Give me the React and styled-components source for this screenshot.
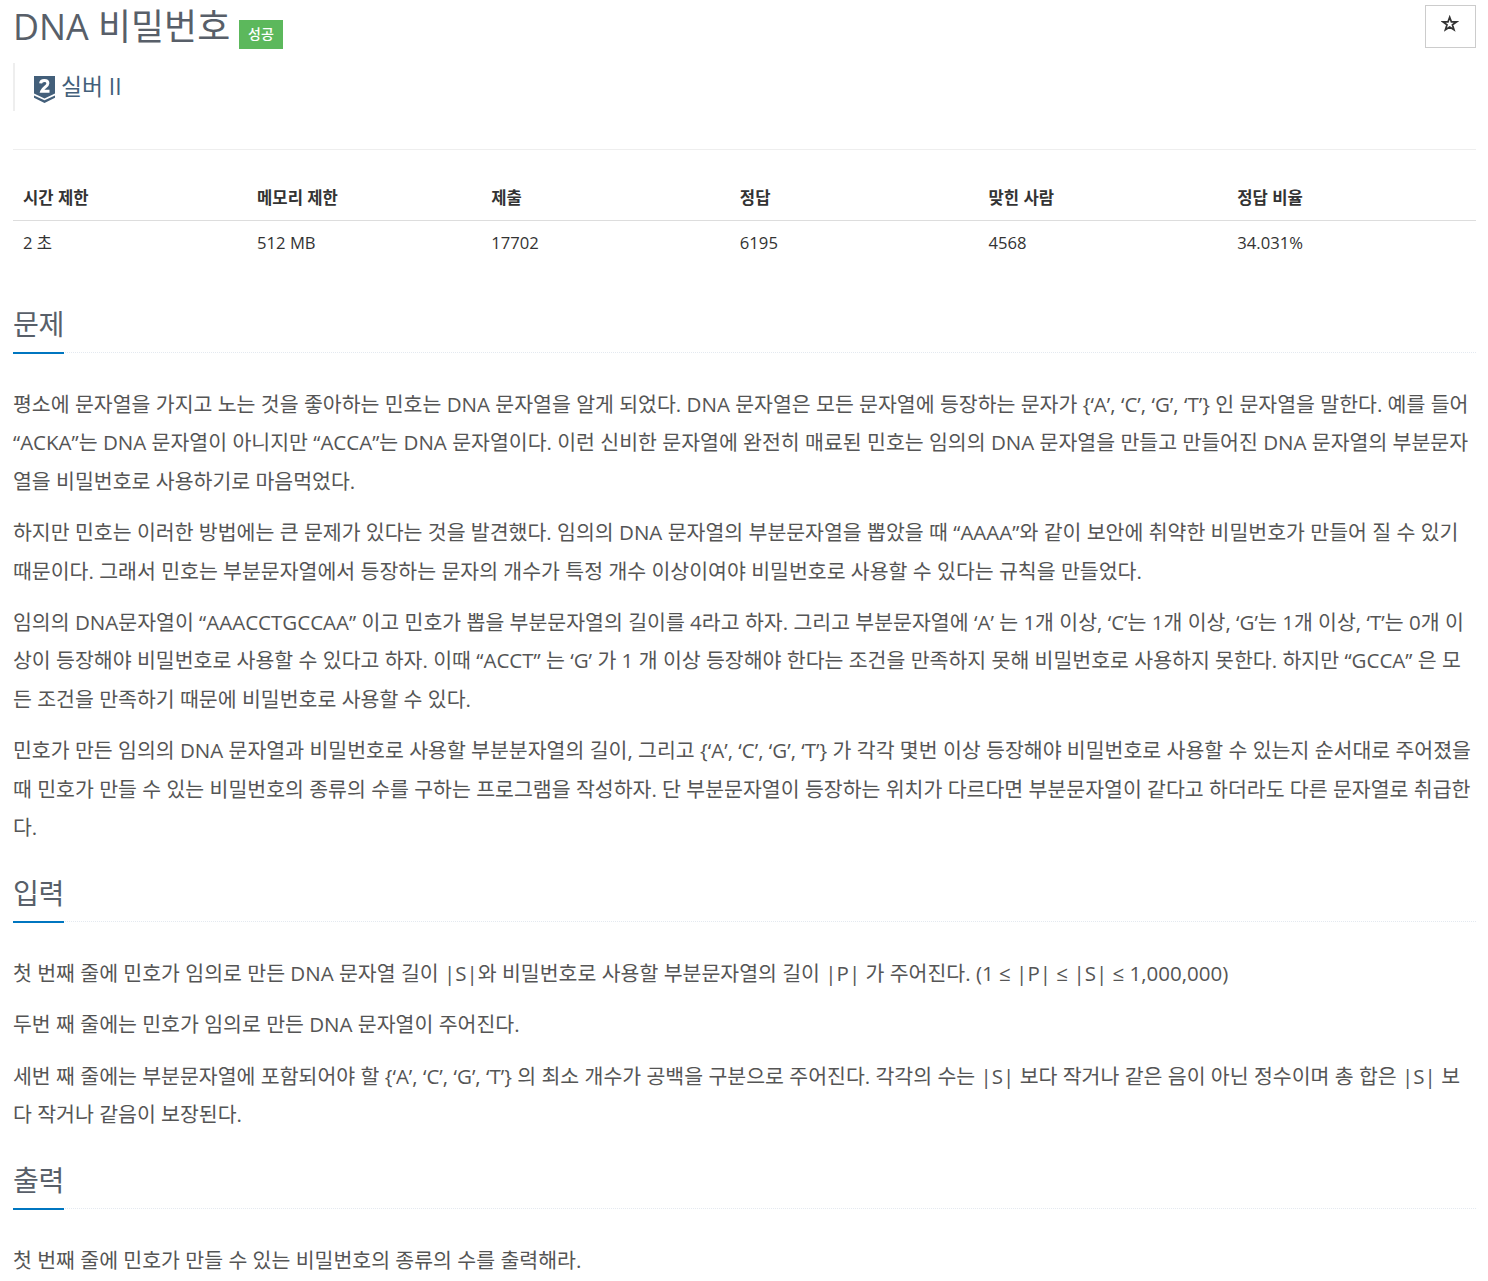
import * as React from 'react';
import styled, { createGlobalStyle } from 'styled-components';

const GlobalStyle = createGlobalStyle`
  * {
    box-sizing: border-box;
  }
  body {
    margin: 0;
    background: white;
    color: #333;
    font-family: 'Open Sans', 'Noto Sans CJK KR', sans-serif;
    font-size: 16.64px;
    line-height: 1.6;
  }
`;

const Container = styled.div`
  width: 1488px;
  height: 1281px;
  overflow: hidden;
  padding: 0 12px 0 13px;
`;

const Header = styled.header`
  display: flex;
  justify-content: space-between;
  height: 150px;
  border-bottom: 1px solid #eee;
`;

const TitleRow = styled.div`
  display: flex;
  align-items: flex-start;
  height: 63px;
`;

const Title = styled.h1`
  width: 216px;
  margin: 0;
  padding-top: 1px;
  font-size: 35.9px;
  font-weight: 400;
  line-height: 51px;
  color: #585f69;
  white-space: nowrap;
`;

const Label = styled.span`
  width: 44px;
  height: 29px;
  margin: 20px 0 0 10px;
  background: #5cb85c;
  color: white;
  font-size: 14px;
  font-weight: 500;
  line-height: 28px;
  text-align: center;
`;

const Tier = styled.blockquote`
  display: flex;
  height: 48px;
  margin: 0;
  padding: 12px 0 0 19px;
  border-left: 2px solid #eee;
  color: #435f7a;
  font-size: 22.8px;
  font-weight: 400;
  line-height: 23px;
`;

const TierIcon = styled.svg`
  width: 21px;
  height: 28px;
  margin: 1px 6px 0 0;
`;

const StarButton = styled.button`
  display: flex;
  align-items: flex-start;
  justify-content: center;
  width: 51px;
  height: 43px;
  margin-top: 5px;
  padding: 9px 2px 0 0;
  border: 1px solid #ccc;
  background: white;
`;

const Table = styled.table`
  width: 100%;
  margin-top: 25px;
  border-collapse: collapse;
  table-layout: fixed;
`;

const Th = styled.th`
  width: ${({ $width }) => $width};
  height: 45px;
  padding: 1px 10px 0;
  border-bottom: 1px solid #ddd;
  text-align: left;
  line-height: 24px;
`;

const Td = styled.td`
  height: 45px;
  padding: 0 10px;
  line-height: 24px;
`;

const Section = styled.section`
  padding-bottom: ${({ $gap }) => $gap};
`;

const Headline = styled.div`
  height: 49px;
  margin: ${({ $first }) => ($first ? '39.4px 0 31.6px' : '0 0 32px')};
  border-bottom: 1px dotted #e4e9f0;
`;

const SectionTitle = styled.h2`
  display: inline-block;
  height: 50px;
  margin: 0;
  border-bottom: 2px solid #0076c0;
  color: #585f69;
  font-size: 28.16px;
  font-weight: 400;
  line-height: 41.2px;
  letter-spacing: -0.4px;
`;

const Paragraph = styled.p`
  margin: 0 0 12.88px;
  color: #555;
  font-size: 20.537px;
  line-height: 38.45px;
`;

const Line = styled.span`
  display: block;
  white-space: nowrap;
`;

const limits = [
  { name: '시간 제한', value: '2 초', width: '16%' },
  { name: '메모리 제한', value: '512 MB', width: '16%' },
  { name: '제출', value: '17702', width: '17%' },
  { name: '정답', value: '6195', width: '17%' },
  { name: '맞힌 사람', value: '4568', width: '17%' },
  { name: '정답 비율', value: '34.031%', width: '17%' },
];

const sections = [
  {
    title: '문제',
    gap: '13.4px',
    paragraphs: [
      [
        '평소에 문자열을 가지고 노는 것을 좋아하는 민호는 DNA 문자열을 알게 되었다. DNA 문자열은 모든 문자열에 등장하는 문자가 {‘A’, ‘C’, ‘G’, ‘T’} 인 문자열을 말한다. 예를 들어',
        '“ACKA”는 DNA 문자열이 아니지만 “ACCA”는 DNA 문자열이다. 이런 신비한 문자열에 완전히 매료된 민호는 임의의 DNA 문자열을 만들고 만들어진 DNA 문자열의 부분문자',
        '열을 비밀번호로 사용하기로 마음먹었다.',
      ],
      [
        '하지만 민호는 이러한 방법에는 큰 문제가 있다는 것을 발견했다. 임의의 DNA 문자열의 부분문자열을 뽑았을 때 “AAAA”와 같이 보안에 취약한 비밀번호가 만들어 질 수 있기',
        '때문이다. 그래서 민호는 부분문자열에서 등장하는 문자의 개수가 특정 개수 이상이여야 비밀번호로 사용할 수 있다는 규칙을 만들었다.',
      ],
      [
        '임의의 DNA문자열이 “AAACCTGCCAA” 이고 민호가 뽑을 부분문자열의 길이를 4라고 하자. 그리고 부분문자열에 ‘A’ 는 1개 이상, ‘C’는 1개 이상, ‘G’는 1개 이상, ‘T’는 0개 이',
        '상이 등장해야 비밀번호로 사용할 수 있다고 하자. 이때 “ACCT” 는 ‘G’ 가 1 개 이상 등장해야 한다는 조건을 만족하지 못해 비밀번호로 사용하지 못한다. 하지만 “GCCA” 은 모',
        '든 조건을 만족하기 때문에 비밀번호로 사용할 수 있다.',
      ],
      [
        '민호가 만든 임의의 DNA 문자열과 비밀번호로 사용할 부분분자열의 길이, 그리고 {‘A’, ‘C’, ‘G’, ‘T’} 가 각각 몇번 이상 등장해야 비밀번호로 사용할 수 있는지 순서대로 주어졌을',
        '때 민호가 만들 수 있는 비밀번호의 종류의 수를 구하는 프로그램을 작성하자. 단 부분문자열이 등장하는 위치가 다르다면 부분문자열이 같다고 하더라도 다른 문자열로 취급한',
        '다.',
      ],
    ],
  },
  {
    title: '입력',
    gap: '14px',
    paragraphs: [
      ['첫 번째 줄에 민호가 임의로 만든 DNA 문자열 길이 |S|와 비밀번호로 사용할 부분문자열의 길이 |P| 가 주어진다. (1 ≤ |P| ≤ |S| ≤ 1,000,000)'],
      ['두번 째 줄에는 민호가 임의로 만든 DNA 문자열이 주어진다.'],
      [
        '세번 째 줄에는 부분문자열에 포함되어야 할 {‘A’, ‘C’, ‘G’, ‘T’} 의 최소 개수가 공백을 구분으로 주어진다. 각각의 수는 |S| 보다 작거나 같은 음이 아닌 정수이며 총 합은 |S| 보',
        '다 작거나 같음이 보장된다.',
      ],
    ],
  },
  {
    title: '출력',
    gap: '0',
    paragraphs: [['첫 번째 줄에 민호가 만들 수 있는 비밀번호의 종류의 수를 출력해라.']],
  },
];

const SilverBadge = () => (
  <TierIcon viewBox='0 0 21 28'>
    <path d='M0 0h21v17.5l-10.5 5L0 17.5z' fill='#435f7a' />
    <path d='M0 19.4l10.5 4.9L21 19.4v2.4l-10.5 5.2L0 21.8z' fill='#435f7a' />
    <path d='M6.6 7.4C6.8 5.2 8.2 4.4 10.3 4.4c2.3 0 3.6 1.1 3.6 2.9 0 3.2-5 4.2-6.2 8h7.8' fill='none' stroke='white' strokeWidth='3' />
  </TierIcon>
);

const StarIcon = () => (
  <svg width='18' height='17' viewBox='0 0 18 17'>
    <path
      d='M8.7 2.2l1.7 4.6h5.2l-4.2 3 1.6 5L8.7 12l-4.3 2.8 1.6-5-4.2-3H7z'
      fill='none'
      stroke='#333'
      strokeWidth='1.7'
    />
  </svg>
);

const App = () => (
  <>
    <GlobalStyle />
    <Container>
      <Header>
        <div>
          <TitleRow>
            <Title>DNA 비밀번호</Title>
            <Label>성공</Label>
          </TitleRow>
          <Tier>
            <SilverBadge />
            실버 II
          </Tier>
        </div>
        <StarButton aria-label='즐겨찾기'>
          <StarIcon />
        </StarButton>
      </Header>
      <Table>
        <thead>
          <tr>
            {limits.map(({ name, width }) => (
              <Th key={name} $width={width}>{name}</Th>
            ))}
          </tr>
        </thead>
        <tbody>
          <tr>
            {limits.map(({ name, value }) => (
              <Td key={name}>{value}</Td>
            ))}
          </tr>
        </tbody>
      </Table>
      {sections.map(({ title, gap, paragraphs }, index) => (
        <Section key={title} $gap={gap}>
          <Headline $first={index === 0}>
            <SectionTitle>{title}</SectionTitle>
          </Headline>
          {paragraphs.map((lines) => (
            <Paragraph key={lines[0]}>
              {lines.map((line) => (
                <Line key={line}>{line}</Line>
              ))}
            </Paragraph>
          ))}
        </Section>
      ))}
    </Container>
  </>
);

export default App;
